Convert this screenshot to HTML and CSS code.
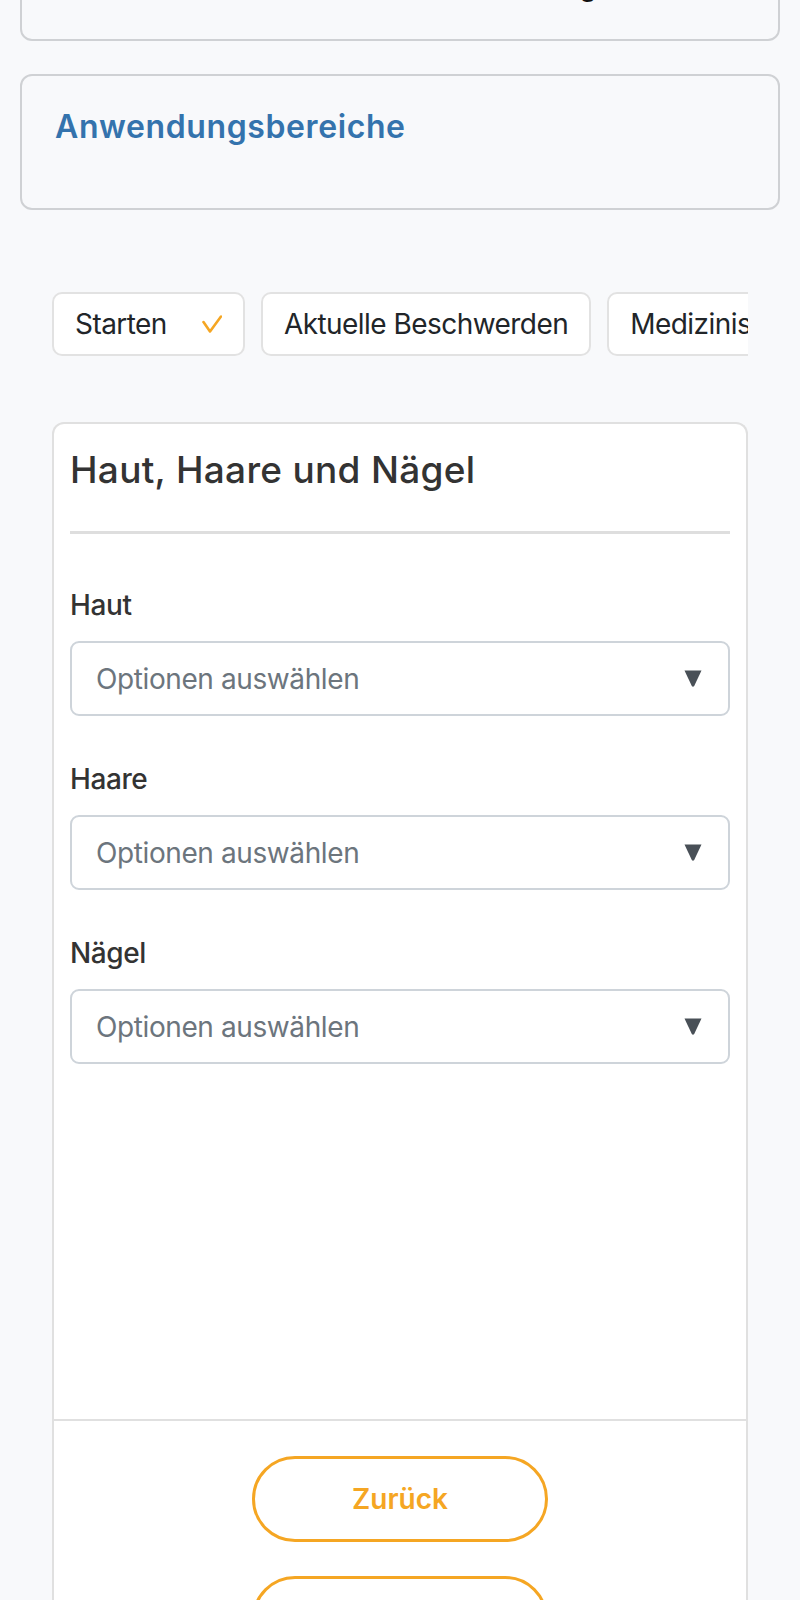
FILE: index.html
```html
<!DOCTYPE html>
<html lang="de">
<head>
    <meta charset="UTF-8">
    <meta name="viewport" content="width=device-width, initial-scale=1.0">
    <title>Anamnese - Haut, Haare und Nägel</title>
    <link rel="stylesheet" href="styles.css">
</head>
<body>

<div class="page">
    <section class="panel panel-intro">
        <p>Alle Informationen für Ihre Beratung</p>
    </section>

    <section class="panel panel-areas">
        <h2>Anwendungsbereiche</h2>
    </section>

    <div class="wizard">
        <nav class="steps">
            <div class="step done">
                <span>Starten</span>
                <svg class="step-check" width="20" height="18" viewBox="0 0 20 18" fill="none">
                    <polyline points="1.5,7 8,16.5 19,1.5" stroke="#f5a623" stroke-width="2.6" stroke-linecap="round" stroke-linejoin="round"/>
                </svg>
            </div>
            <div class="step"><span>Aktuelle Beschwerden</span></div>
            <div class="step"><span>Medizinische Vorgeschichte</span></div>
        </nav>

        <div class="form-card">
            <div class="form-body">
                <h3 class="form-title">Haut, Haare und Nägel</h3>
                <hr class="form-rule">

                <div class="field">
                    <label>Haut</label>
                    <div class="select-box">
                        <span>Optionen auswählen</span>
                        <svg width="18" height="17" viewBox="0 0 18 17"><path d="M0.5 0.5 H17.5 L10.2 16 Q9 17.6 7.8 16 Z" fill="#495057"/></svg>
                    </div>
                </div>

                <div class="field">
                    <label>Haare</label>
                    <div class="select-box">
                        <span>Optionen auswählen</span>
                        <svg width="18" height="17" viewBox="0 0 18 17"><path d="M0.5 0.5 H17.5 L10.2 16 Q9 17.6 7.8 16 Z" fill="#495057"/></svg>
                    </div>
                </div>

                <div class="field">
                    <label>Nägel</label>
                    <div class="select-box">
                        <span>Optionen auswählen</span>
                        <svg width="18" height="17" viewBox="0 0 18 17"><path d="M0.5 0.5 H17.5 L10.2 16 Q9 17.6 7.8 16 Z" fill="#495057"/></svg>
                    </div>
                </div>
            </div>

            <div class="form-footer">
                <button class="btn-outline">Zurück</button>
                <button class="btn-outline">Weiter</button>
            </div>
        </div>
    </div>
</div>

</body>
</html>
```

FILE: styles.css
```css
body {
    font-family: 'Inter', 'Liberation Sans', sans-serif;
    background-color: #f8f9fb;
    margin: 0;
    padding: 0;
    color: #212529;
    letter-spacing: -0.4px;
}
.page {
    padding: 0 20px;
}
.panel {
    border: 2px solid #cfd1d4;
    border-radius: 12px;
    background: #f8f9fb;
}
.panel-intro {
    margin-top: -50px;
    padding: 16px 33px 35px 116px;
}
.panel-intro p {
    margin: 0;
    font-size: 28px;
    line-height: 36px;
    color: #111;
}
.panel-areas {
    margin-top: 33px;
    padding: 32px 33px 62px;
}
.panel-areas h2 {
    margin: 0;
    font-size: 32px;
    line-height: 1.2;
    font-weight: 600;
    color: #3473ad;
    letter-spacing: 0.6px;
}
.wizard {
    padding: 0 32px;
    margin-top: 82px;
}
.steps {
    display: flex;
    gap: 16px;
    overflow: hidden;
}
.step {
    flex: none;
    display: flex;
    align-items: center;
    height: 64px;
    box-sizing: border-box;
    padding: 0 21px;
    background: #fff;
    border: 2px solid #e2e2e2;
    border-radius: 10px;
    font-size: 28px;
    color: #212529;
    letter-spacing: -0.55px;
    white-space: nowrap;
}
.step-check {
    margin-left: 35px;
}
.form-card {
    margin-top: 66px;
    background: #fff;
    border: 2px solid #e0e0e0;
    border-bottom: none;
    border-radius: 12px 12px 0 0;
}
.form-body {
    box-sizing: border-box;
    min-height: 995px;
    padding: 16px 16px 0;
}
.form-title {
    margin: 8px 0 0;
    font-size: 37px;
    line-height: 44px;
    font-weight: 500;
    color: #333;
    letter-spacing: 0.3px;
}
.form-rule {
    margin: 39px 0 0;
    border: none;
    height: 3px;
    background: #dedede;
}
.field {
    margin-top: 53px;
}
.field + .field {
    margin-top: 45px;
}
.field label {
    display: block;
    font-size: 28px;
    line-height: 36px;
    font-weight: 500;
    color: #333;
}
.select-box {
    margin-top: 18px;
    display: flex;
    align-items: center;
    justify-content: space-between;
    height: 75px;
    box-sizing: border-box;
    padding: 0 26px 0 24px;
    border: 2px solid #ced4da;
    border-radius: 9px;
    font-size: 28px;
    color: #6c757d;
}
.form-footer {
    border-top: 2px solid #e0e0e0;
    padding: 35px 0;
    display: flex;
    flex-direction: column;
    align-items: center;
    gap: 34px;
}
.btn-outline {
    width: 296px;
    height: 86px;
    border: 3px solid #f5a623;
    border-radius: 43px;
    background: #fff;
    color: #f5a623;
    font-family: inherit;
    font-size: 28px;
    font-weight: 600;
    letter-spacing: 0;
    cursor: pointer;
}
```
